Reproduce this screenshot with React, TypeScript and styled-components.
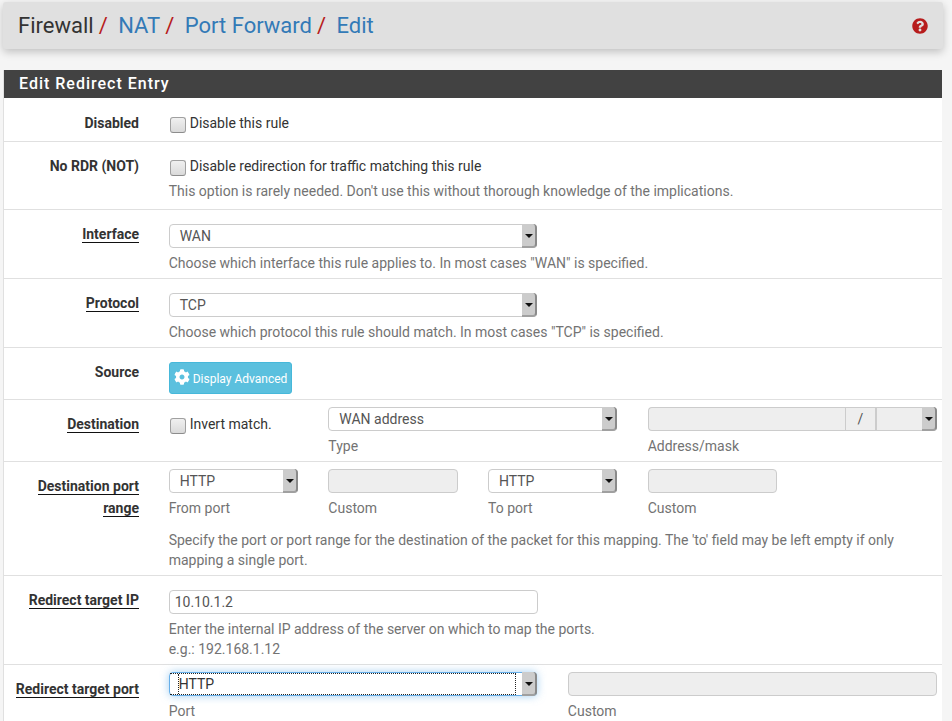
import React from "react";
import styled, { createGlobalStyle } from "styled-components";
import { FaCog, FaQuestionCircle } from "react-icons/fa";

const GlobalStyle = createGlobalStyle`
  html, body {
    margin: 0;
    padding: 0;
    background: #f5f5f5;
    font-family: Roboto, "Liberation Sans", sans-serif;
    font-size: 14px;
    line-height: 20px;
    color: #333;
    overflow: hidden;
  }
`;

const Page = styled.div`
  width: 952px;
  height: 721px;
  overflow: hidden;
  padding: 2px 10px 0 4px;
  box-sizing: border-box;
`;

const Breadcrumb = styled.div`
  height: 47px;
  display: flex;
  align-items: center;
  justify-content: space-between;
  padding: 0 15px;
  margin: 0 -1px 21px -1px;
  background: #e0e0e0;
  border-radius: 3px;
  box-shadow: 0 3px 8px rgba(0, 0, 0, 0.22);
  font-size: 22px;
`;

const Crumbs = styled.div`
  display: flex;
  align-items: baseline;
`;

const Crumb = styled.span<{ $link?: boolean }>`
  color: ${(p) => (p.$link ? "#337ab7" : "#333")};
`;

const Slash = styled.span`
  color: #b71c1c;
  margin: 0 10.5px 0 5px;
`;

const Help = styled.span`
  display: flex;
  color: #b71c1c;
  font-size: 16px;
`;

const Panel = styled.div`
  background: #fff;
  box-shadow: -1px 0 0 #e0e0e0;
`;

const PanelHeading = styled.h2`
  margin: 0;
  height: 28px;
  padding: 0 15px;
  background: #424242;
  color: #fff;
  font-size: 16px;
  font-weight: 500;
  letter-spacing: 1px;
  line-height: 28px;
`;

const Row = styled.div<{ $height: number }>`
  display: flex;
  box-sizing: border-box;
  height: ${(p) => p.$height}px;
  border-bottom: 1px solid #e0e0e0;
`;

const Label = styled.div<{ $top?: number }>`
  width: 135px;
  flex: none;
  box-sizing: content-box;
  padding-top: ${(p) => p.$top ?? 13}px;
  text-align: right;
  font-weight: 700;
  line-height: 22px;
`;

const Underlined = styled.span`
  border-bottom: 1px solid #111;
`;

const Content = styled.div<{ $top?: number }>`
  margin-left: 29.7px;
  width: 768.3px;
  padding-top: ${(p) => p.$top ?? 14}px;
`;

const Grid = styled.div`
  display: grid;
  grid-template-columns: repeat(10, 1fr);
  column-gap: 30px;
`;

const Cell = styled.div<{ $span: number }>`
  grid-column: span ${(p) => p.$span};
  min-width: 0;
`;

const Check = styled.label<{ $top?: number }>`
  display: flex;
  align-items: flex-start;
  margin-top: ${(p) => p.$top ?? 0}px;
`;

const Box = styled.span`
  box-sizing: border-box;
  width: 16px;
  height: 16px;
  margin: 4px 4px 0 1px;
  flex: none;
  border: 1px solid #a0a0a0;
  border-bottom-color: #8c8c8c;
  border-radius: 3px;
  background: linear-gradient(#f0f0f0, #dadada);
`;

const HelpText = styled.div`
  color: #737373;
  margin-top: 5px;
`;

const Select = styled.div<{ $focus?: boolean; $disabled?: boolean }>`
  position: relative;
  box-sizing: border-box;
  width: calc(100% - 0.5px);
  height: 24px;
  display: flex;
  align-items: center;
  padding-left: ${(p) => (p.$focus ? 9 : 10)}px;
  border: 1px solid ${(p) => (p.$focus ? "#66afe9" : "#ccc")};
  border-radius: 4px;
  background: ${(p) => (p.$disabled ? "#eee" : "#fff")};
  color: ${(p) => (p.$focus ? "#333" : "#555")};
  box-shadow: ${(p) =>
    p.$focus ? "0 0 8px rgba(102, 175, 233, 0.6)" : "none"};
`;

const FocusRing = styled.span`
  position: absolute;
  left: 0;
  right: 20px;
  top: 0;
  bottom: 0;
  border-top: 1px dotted #222;
  border-bottom: 1px dotted #222;
  border-right: 1px dotted #222;
  &::before {
    content: "";
    position: absolute;
    left: 8px;
    top: 0;
    bottom: 0;
    border-left: 1px dotted #222;
  }
`;

const SelectArrow = styled.span`
  position: absolute;
  top: -1px;
  right: -1px;
  bottom: -1px;
  width: 15px;
  box-sizing: border-box;
  background: #ccc;
  border-right: 2px solid #8a8a8a;
  border-bottom: 2px solid #a0a0a0;
  border-radius: 0 4px 4px 0;
  &::after {
    content: "";
    position: absolute;
    left: 3px;
    top: 10px;
    border-left: 4px solid transparent;
    border-right: 4px solid transparent;
    border-top: 4px solid #111;
  }
`;

const Input = styled.div<{ $disabled?: boolean }>`
  box-sizing: border-box;
  height: 24px;
  line-height: 22px;
  padding: 0 5px;
  border: 1px solid #ccc;
  border-radius: 4px;
  background: ${(p) => (p.$disabled ? "#eee" : "#fff")};
  color: #555;
`;

const MaskGroup = styled.div`
  display: flex;
`;

const AddressPart = styled(Input)`
  flex: 1;
  border-right: 0;
  border-radius: 4px 0 0 4px;
`;

const SlashPart = styled.div`
  box-sizing: border-box;
  width: 32px;
  height: 24px;
  line-height: 22px;
  text-align: center;
  background: #eee;
  border: 1px solid #ccc;
  border-width: 1px 2px 1px 1px;
  color: #555;
`;

const MaskSelect = styled(Select)`
  width: 60px;
  border-left: 0;
  border-radius: 0 4px 4px 0;
`;

const InfoButton = styled.button`
  display: flex;
  align-items: center;
  gap: 3px;
  height: 32px;
  padding: 2px 4px 0;
  border: 1px solid #46b8da;
  border-radius: 3px;
  background: #5bc0de;
  color: #fff;
  font-family: inherit;
  font-size: 12px;
`;

const GearIcon = styled(FaCog)`
  font-size: 16px;
  margin-top: -4px;
`;

const Note = styled.div`
  color: #737373;
  margin-top: 12px;
`;

export default function App() {
  return (
    <Page>
      <GlobalStyle />
      <Breadcrumb>
        <Crumbs>
          <Crumb>Firewall</Crumb>
          <Slash>/</Slash>
          <Crumb $link>NAT</Crumb>
          <Slash>/</Slash>
          <Crumb $link>Port Forward</Crumb>
          <Slash>/</Slash>
          <Crumb $link>Edit</Crumb>
        </Crumbs>
        <Help>
          <FaQuestionCircle />
        </Help>
      </Breadcrumb>

      <Panel>
        <PanelHeading>Edit Redirect Entry</PanelHeading>

        <Row $height={44}>
          <Label $top={14}>Disabled</Label>
          <Content $top={15}>
            <Check>
              <Box />
              Disable this rule
            </Check>
          </Content>
        </Row>

        <Row $height={68}>
          <Label>No RDR (NOT)</Label>
          <Content>
            <Check>
              <Box />
              Disable redirection for traffic matching this rule
            </Check>
            <HelpText>
              This option is rarely needed. Don't use this without thorough
              knowledge of the implications.
            </HelpText>
          </Content>
        </Row>

        <Row $height={69}>
          <Label>
            <Underlined>Interface</Underlined>
          </Label>
          <Content>
            <Grid>
              <Cell $span={5}>
                <Select>
                  WAN
                  <SelectArrow />
                </Select>
              </Cell>
            </Grid>
            <HelpText>
              Choose which interface this rule applies to. In most cases "WAN"
              is specified.
            </HelpText>
          </Content>
        </Row>

        <Row $height={69}>
          <Label>
            <Underlined>Protocol</Underlined>
          </Label>
          <Content>
            <Grid>
              <Cell $span={5}>
                <Select>
                  TCP
                  <SelectArrow />
                </Select>
              </Cell>
            </Grid>
            <HelpText>
              Choose which protocol this rule should match. In most cases "TCP"
              is specified.
            </HelpText>
          </Content>
        </Row>

        <Row $height={52}>
          <Label>Source</Label>
          <Content>
            <InfoButton>
              <GearIcon />
              Display Advanced
            </InfoButton>
          </Content>
        </Row>

        <Row $height={62}>
          <Label>
            <Underlined>Destination</Underlined>
          </Label>
          <Content $top={7}>
            <Grid>
              <Cell $span={2}>
                <Check $top={7}>
                  <Box />
                  Invert match.
                </Check>
              </Cell>
              <Cell $span={4}>
                <Select>
                  WAN address
                  <SelectArrow />
                </Select>
                <HelpText>Type</HelpText>
              </Cell>
              <Cell $span={4}>
                <MaskGroup>
                  <AddressPart $disabled />
                  <SlashPart>/</SlashPart>
                  <MaskSelect $disabled>
                    <SelectArrow />
                  </MaskSelect>
                </MaskGroup>
                <HelpText>Address/mask</HelpText>
              </Cell>
            </Grid>
          </Content>
        </Row>

        <Row $height={114}>
          <Label>
            <Underlined>Destination port</Underlined>{" "}
            <Underlined>range</Underlined>
          </Label>
          <Content $top={7}>
            <Grid>
              <Cell $span={2}>
                <Select>
                  HTTP
                  <SelectArrow />
                </Select>
                <HelpText>From port</HelpText>
              </Cell>
              <Cell $span={2}>
                <Input $disabled />
                <HelpText>Custom</HelpText>
              </Cell>
              <Cell $span={2}>
                <Select>
                  HTTP
                  <SelectArrow />
                </Select>
                <HelpText>To port</HelpText>
              </Cell>
              <Cell $span={2}>
                <Input $disabled />
                <HelpText>Custom</HelpText>
              </Cell>
            </Grid>
            <Note>
              Specify the port or port range for the destination of the packet
              for this mapping. The 'to' field may be left empty if only
              mapping a single port.
            </Note>
          </Content>
        </Row>

        <Row $height={89}>
          <Label>
            <Underlined>Redirect target IP</Underlined>
          </Label>
          <Content>
            <Grid>
              <Cell $span={5}>
                <Input>10.10.1.2</Input>
              </Cell>
            </Grid>
            <HelpText>
              Enter the internal IP address of the server on which to map the
              ports.
              <br />
              e.g.: 192.168.1.12
            </HelpText>
          </Content>
        </Row>

        <Row $height={70}>
          <Label>
            <Underlined>Redirect target port</Underlined>
          </Label>
          <Content $top={7}>
            <Grid>
              <Cell $span={5}>
                <Select $focus>
                  <FocusRing />
                  HTTP
                  <SelectArrow />
                </Select>
                <HelpText>Port</HelpText>
              </Cell>
              <Cell $span={5}>
                <Input $disabled />
                <HelpText>Custom</HelpText>
              </Cell>
            </Grid>
          </Content>
        </Row>
      </Panel>
    </Page>
  );
}
